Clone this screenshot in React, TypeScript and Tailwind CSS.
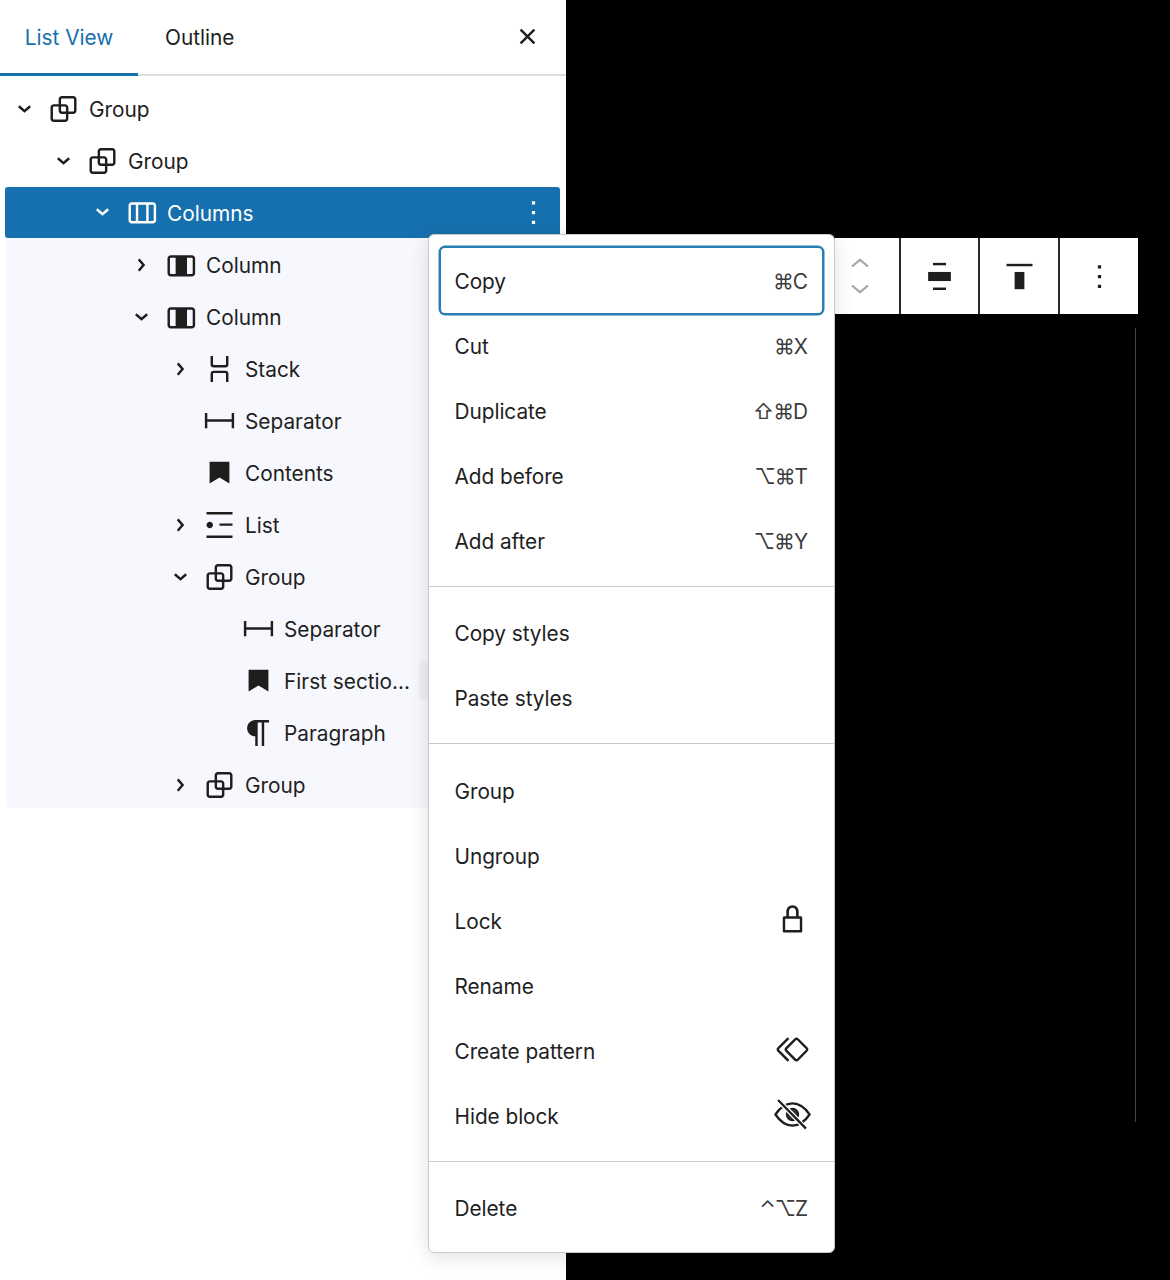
import type { ReactNode } from "react";

const paths = {
  group:
    "M18 4h-7c-1.1 0-2 .9-2 2v3H6c-1.1 0-2 .9-2 2v7c0 1.1.9 2 2 2h7c1.1 0 2-.9 2-2v-3h3c1.1 0 2-.9 2-2V6c0-1.1-.9-2-2-2zm-4.5 14c0 .3-.2.5-.5.5H6c-.3 0-.5-.2-.5-.5v-7c0-.3.2-.5.5-.5h3V13c0 1.1.9 2 2 2h2.5v3zm0-4.5H11c-.3 0-.5-.2-.5-.5v-2.5H13c.3 0 .5.2.5.5v2.5zm5-.5c0 .3-.2.5-.5.5h-3V11c0-1.1-.9-2-2-2h-2.5V6c0-.3.2-.5.5-.5h7c.3 0 .5.2.5.5v7z",
  columns:
    "M19 6H6c-1.1 0-2 .9-2 2v9c0 1.1.9 2 2 2h13c1.1 0 2-.9 2-2V8c0-1.1-.9-2-2-2zm-4.1 1.5v10H10v-10h4.9zM5.5 17V8c0-.3.2-.5.5-.5h2.5v10H6c-.3 0-.5-.2-.5-.5zm14 0c0 .3-.2.5-.5.5h-2.6v-10H19c.3 0 .5.2.5.5v9z",
  column:
    "M19 6H6c-1.1 0-2 .9-2 2v9c0 1.1.9 2 2 2h13c1.1 0 2-.9 2-2V8c0-1.1-.9-2-2-2zM6 17.5c-.3 0-.5-.2-.5-.5V8c0-.3.2-.5.5-.5h3v10H6zm13.5-.5c0 .3-.2.5-.5.5h-3v-10h3c.3 0 .5.2.5.5v9z",
  stack:
    "M17.5 4v5a2 2 0 0 1-2 2h-7a2 2 0 0 1-2-2V4H8v5a.5.5 0 0 0 .5.5h7A.5.5 0 0 0 16 9V4h1.5Zm0 16v-5a2 2 0 0 0-2-2h-7a2 2 0 0 0-2 2v5H8v-5a.5.5 0 0 1 .5-.5h7a.5.5 0 0 1 .5.5v5h1.5Z",
  separator: "M4.5 12.5v4H3V7h1.5v3.987h15V7H21v9.5h-1.5v-4h-15Z",
  bookmark: "M5.9 5.1h12.2v13.4l-6.1-3.7-6.1 3.7z",
  list: "M4 4v1.5h16V4H4zm8 8.5h8V11h-8v1.5zM4 20h16v-1.5H4V20zm4-8c0-1.1-.9-2-2-2s-2 .9-2 2 .9 2 2 2 2-.9 2-2z",
  paragraph:
    "m9.99609 14v-.2251l.00391.0001v6.225h1.5v-14.5h2.5v14.5h1.5v-14.5h3v-1.5h-8.50391c-2.76142 0-5 2.23858-5 5 0 2.7614 2.23858 5 5 5z",
  down: "m15.99 10.889-3.988 3.418-3.988-3.418.976-1.14 3.012 2.582 3.012-2.581.976 1.139Z",
  right: "M10.8622 8.04053L14.2805 12.0286L10.8622 16.0167L9.72327 15.0405L12.3049 12.0286L9.72327 9.01672L10.8622 8.04053Z",
  close:
    "M12 13.06l3.712 3.713 1.061-1.06L13.061 12l3.712-3.712-1.06-1.06L12 10.938 8.288 7.227l-1.061 1.06L10.939 12l-3.712 3.712 1.06 1.061L12 13.061z",
  more: "M13 19h-2v-2h2v2zm0-6h-2v-2h2v2zm0-6h-2V5h2v2z",
  lock: "M17 10h-1.2V7c0-2.1-1.7-3.8-3.8-3.8-2.1 0-3.8 1.7-3.8 3.8v3H7c-.6 0-1 .4-1 1v8c0 .6.4 1 1 1h10c.6 0 1-.4 1-1v-8c0-.6-.4-1-1-1zM9.8 7c0-1.2 1-2.2 2.2-2.2 1.2 0 2.2 1 2.2 2.2v3H9.8V7zm6.7 11.5h-9v-7h9v7z",
  symbol:
    "M21.3 10.8l-5.6-5.6c-.7-.7-1.8-.7-2.5 0l-5.6 5.6c-.7.7-.7 1.8 0 2.5l5.6 5.6c.3.3.8.5 1.2.5s.9-.2 1.2-.5l5.6-5.6c.8-.7.8-1.9.1-2.5zm-1 1.4l-5.6 5.6c-.1.1-.3.1-.4 0l-5.6-5.6c-.1-.1-.1-.3 0-.4l5.6-5.6s.1-.1.2-.1.1 0 .2.1l5.6 5.6c.1.1.1.3 0 .4zm-16.6-.4L10 5.5l-1-1-6.3 6.3c-.7.7-.7 1.8 0 2.5L9 19.5l1.1-1.1-6.3-6.3c-.2 0-.2-.2-.1-.3z",
};

type IconName = keyof typeof paths;

function Icon({ name, className = "" }: { name: IconName; className?: string }) {
  return (
    <svg viewBox="0 0 24 24" className={`h-[39px] w-[39px] shrink-0 fill-current ${className}`}>
      <path d={paths[name]} />
    </svg>
  );
}

function Hidden() {
  return (
    <svg viewBox="0 0 24 24" className="h-[39px] w-[39px] shrink-0" fill="none" stroke="#1e1e1e" strokeWidth="1.4">
      <path d="M1.5 12C4.5 7.5 8 5.2 12 5.2S19.5 7.5 22.5 12C19.5 16.5 16 18.8 12 18.8S4.5 16.5 1.5 12Z" />
      <circle cx="12" cy="12" r="3.4" fill="#3a3a3a" />
      <path d="M3.1 3.1 20.3 20.7" stroke="#fff" strokeWidth="3" />
      <path d="M3.1 3.1 20.3 20.7" />
    </svg>
  );
}

const indents = ["ml-0", "ml-[39px]", "ml-[78px]", "ml-[117px]", "ml-[156px]", "ml-[195px]"];

type Row = { level: number; icon: IconName; label: string; chevron?: "down" | "right"; hover?: boolean };

const topRows: Row[] = [
  { level: 0, icon: "group", label: "Group", chevron: "down" },
  { level: 1, icon: "group", label: "Group", chevron: "down" },
];

const childRows: Row[] = [
  { level: 3, icon: "column", label: "Column", chevron: "right" },
  { level: 3, icon: "column", label: "Column", chevron: "down" },
  { level: 4, icon: "stack", label: "Stack", chevron: "right" },
  { level: 4, icon: "separator", label: "Separator" },
  { level: 4, icon: "bookmark", label: "Contents" },
  { level: 4, icon: "list", label: "List", chevron: "right" },
  { level: 4, icon: "group", label: "Group", chevron: "down" },
  { level: 5, icon: "separator", label: "Separator" },
  { level: 5, icon: "bookmark", label: "First sectio…", hover: true },
  { level: 5, icon: "paragraph", label: "Paragraph" },
  { level: 4, icon: "group", label: "Group", chevron: "right" },
];

function TreeRow({ row, selected }: { row: Row; selected?: boolean }) {
  return (
    <div
      className={`relative flex items-center ${
        selected ? "h-[51px] rounded-[3px] bg-[#1670ad] text-white" : "h-[52px] text-[#1e1e1e]"
      }`}
    >
      <div className={`flex items-center ${indents[row.level]}`}>
        {row.chevron ? (
          <Icon name={row.chevron} className="-translate-y-[0.5px]" />
        ) : (
          <div className="h-[39px] w-[39px]" />
        )}
        <Icon name={row.icon} className="-translate-y-[0.5px]" />
        <span className="ml-[6px] pt-[2px]">{row.label}</span>
      </div>
      {row.hover && <div className="absolute left-[414px] top-[6px] h-[39px] w-[10px] bg-[#eff0f4]" />}
      {selected && (
        <div className="absolute right-[7px] top-[6px]">
          <Icon name="more" />
        </div>
      )}
    </div>
  );
}

function MenuItem({
  label,
  shortcut,
  icon,
  focused,
}: {
  label: string;
  shortcut?: string;
  icon?: ReactNode;
  focused?: boolean;
}) {
  return (
    <div
      className={`flex h-[65px] items-center justify-between pl-[13.5px] ${
        focused ? "rounded-[4px] ring-[2.5px] ring-[#2a7db5]" : ""
      } ${icon ? "pr-[10.5px]" : "pr-[15px]"}`}
    >
      <span className="pt-[2px] tracking-[-0.05px]">{label}</span>
      {shortcut && <span className="pt-[2px] tracking-[-1px] text-[#3c3c3c]">{shortcut}</span>}
      {icon && <div className="-translate-y-[1px]">{icon}</div>}
    </div>
  );
}

function MoverIcon() {
  return (
    <svg viewBox="0 0 20 38" className="h-[38px] w-[20px]" fill="none" stroke="#a8a8a8" strokeWidth="2.2">
      <path d="M2 9.5 10 2.8 18 9.5" />
      <path d="M2 28.5 10 35.2 18 28.5" />
    </svg>
  );
}

function AlignCenterIcon() {
  return (
    <svg viewBox="0 0 24 24" className="h-[39px] w-[39px] fill-[#1e1e1e]">
      <rect x="8" y="3.6" width="8" height="1.5" />
      <rect x="5" y="9.2" width="14" height="5.6" />
      <rect x="8" y="18.8" width="8" height="1.5" />
    </svg>
  );
}

function AlignTopIcon() {
  return (
    <svg viewBox="0 0 24 24" className="h-[39px] w-[39px] fill-[#1e1e1e]">
      <rect x="4" y="4.2" width="16" height="1.5" />
      <rect x="9" y="9.2" width="6" height="10.6" />
    </svg>
  );
}

export default function App() {
  return (
    <div className="relative h-[1280px] overflow-hidden bg-black font-['Inter','DejaVu_Sans',sans-serif] text-[20.8px] text-[#1e1e1e]">
      {/* sidebar */}
      <div className="h-full w-[566px] bg-white">
        <div className="flex h-[76px] items-center border-b-2 border-[#dddddd]">
          <div className="-mb-[2px] flex h-[76px] w-[138px] items-center justify-center border-b-[3px] border-[#1670ad] pt-[3px] text-[#1670ad]">
            List View
          </div>
          <div className="ml-[27px] pt-[1px]">Outline</div>
          <div className="ml-auto mr-[19px] -mt-[1px]">
            <Icon name="close" />
          </div>
        </div>

        <div className="ml-[5px] w-[555px] pt-[7px]">
          {topRows.map((row, i) => (
            <TreeRow key={i} row={row} />
          ))}
          <TreeRow selected row={{ level: 2, icon: "columns", label: "Columns", chevron: "down" }} />
          <div className="ml-px h-[570px] rounded-b-[4px] bg-[#f7f8fd] pt-px">
            <div className="-ml-px">
              {childRows.map((row, i) => (
                <TreeRow key={i} row={row} />
              ))}
            </div>
          </div>
        </div>
      </div>

      {/* block toolbar */}
      <div className="absolute left-[835px] top-[238px] flex h-[76px] w-[303px] bg-white">
        <div className="flex w-[64px] items-center pl-[15px]">
          <MoverIcon />
        </div>
        <div className="flex w-[79px] items-center justify-center border-l-2 border-[#2a2a2a]">
          <AlignCenterIcon />
        </div>
        <div className="flex w-[80px] items-center justify-center border-l-2 border-[#2a2a2a]">
          <AlignTopIcon />
        </div>
        <div className="flex w-[80px] items-center justify-center border-l-2 border-[#2a2a2a]">
          <Icon name="more" />
        </div>
      </div>
      <div className="absolute left-[1135px] top-[328px] h-[794px] w-px bg-[#444444]" />

      {/* options menu */}
      <div className="absolute left-[428px] top-[234px] w-[407px] divide-y divide-[#c9c9cd] rounded-[6px] border border-[#c9c9cd] bg-white shadow-[0_4px_20px_rgba(0,0,0,0.12)]">
        <div className="px-[12px] py-[13px]">
          <MenuItem label="Copy" shortcut="⌘C" focused />
          <MenuItem label="Cut" shortcut="⌘X" />
          <MenuItem label="Duplicate" shortcut="⇧⌘D" />
          <MenuItem label="Add before" shortcut="⌥⌘T" />
          <MenuItem label="Add after" shortcut="⌥⌘Y" />
        </div>
        <div className="px-[12px] py-[13px]">
          <MenuItem label="Copy styles" />
          <MenuItem label="Paste styles" />
        </div>
        <div className="px-[12px] pb-[13px] pt-[14px]">
          <MenuItem label="Group" />
          <MenuItem label="Ungroup" />
          <MenuItem label="Lock" icon={<Icon name="lock" />} />
          <MenuItem label="Rename" />
          <MenuItem label="Create pattern" icon={<Icon name="symbol" />} />
          <MenuItem label="Hide block" icon={<Hidden />} />
        </div>
        <div className="px-[12px] pb-[12px] pt-[13px]">
          <MenuItem label="Delete" shortcut="⌃⌥Z" />
        </div>
      </div>
    </div>
  );
}
